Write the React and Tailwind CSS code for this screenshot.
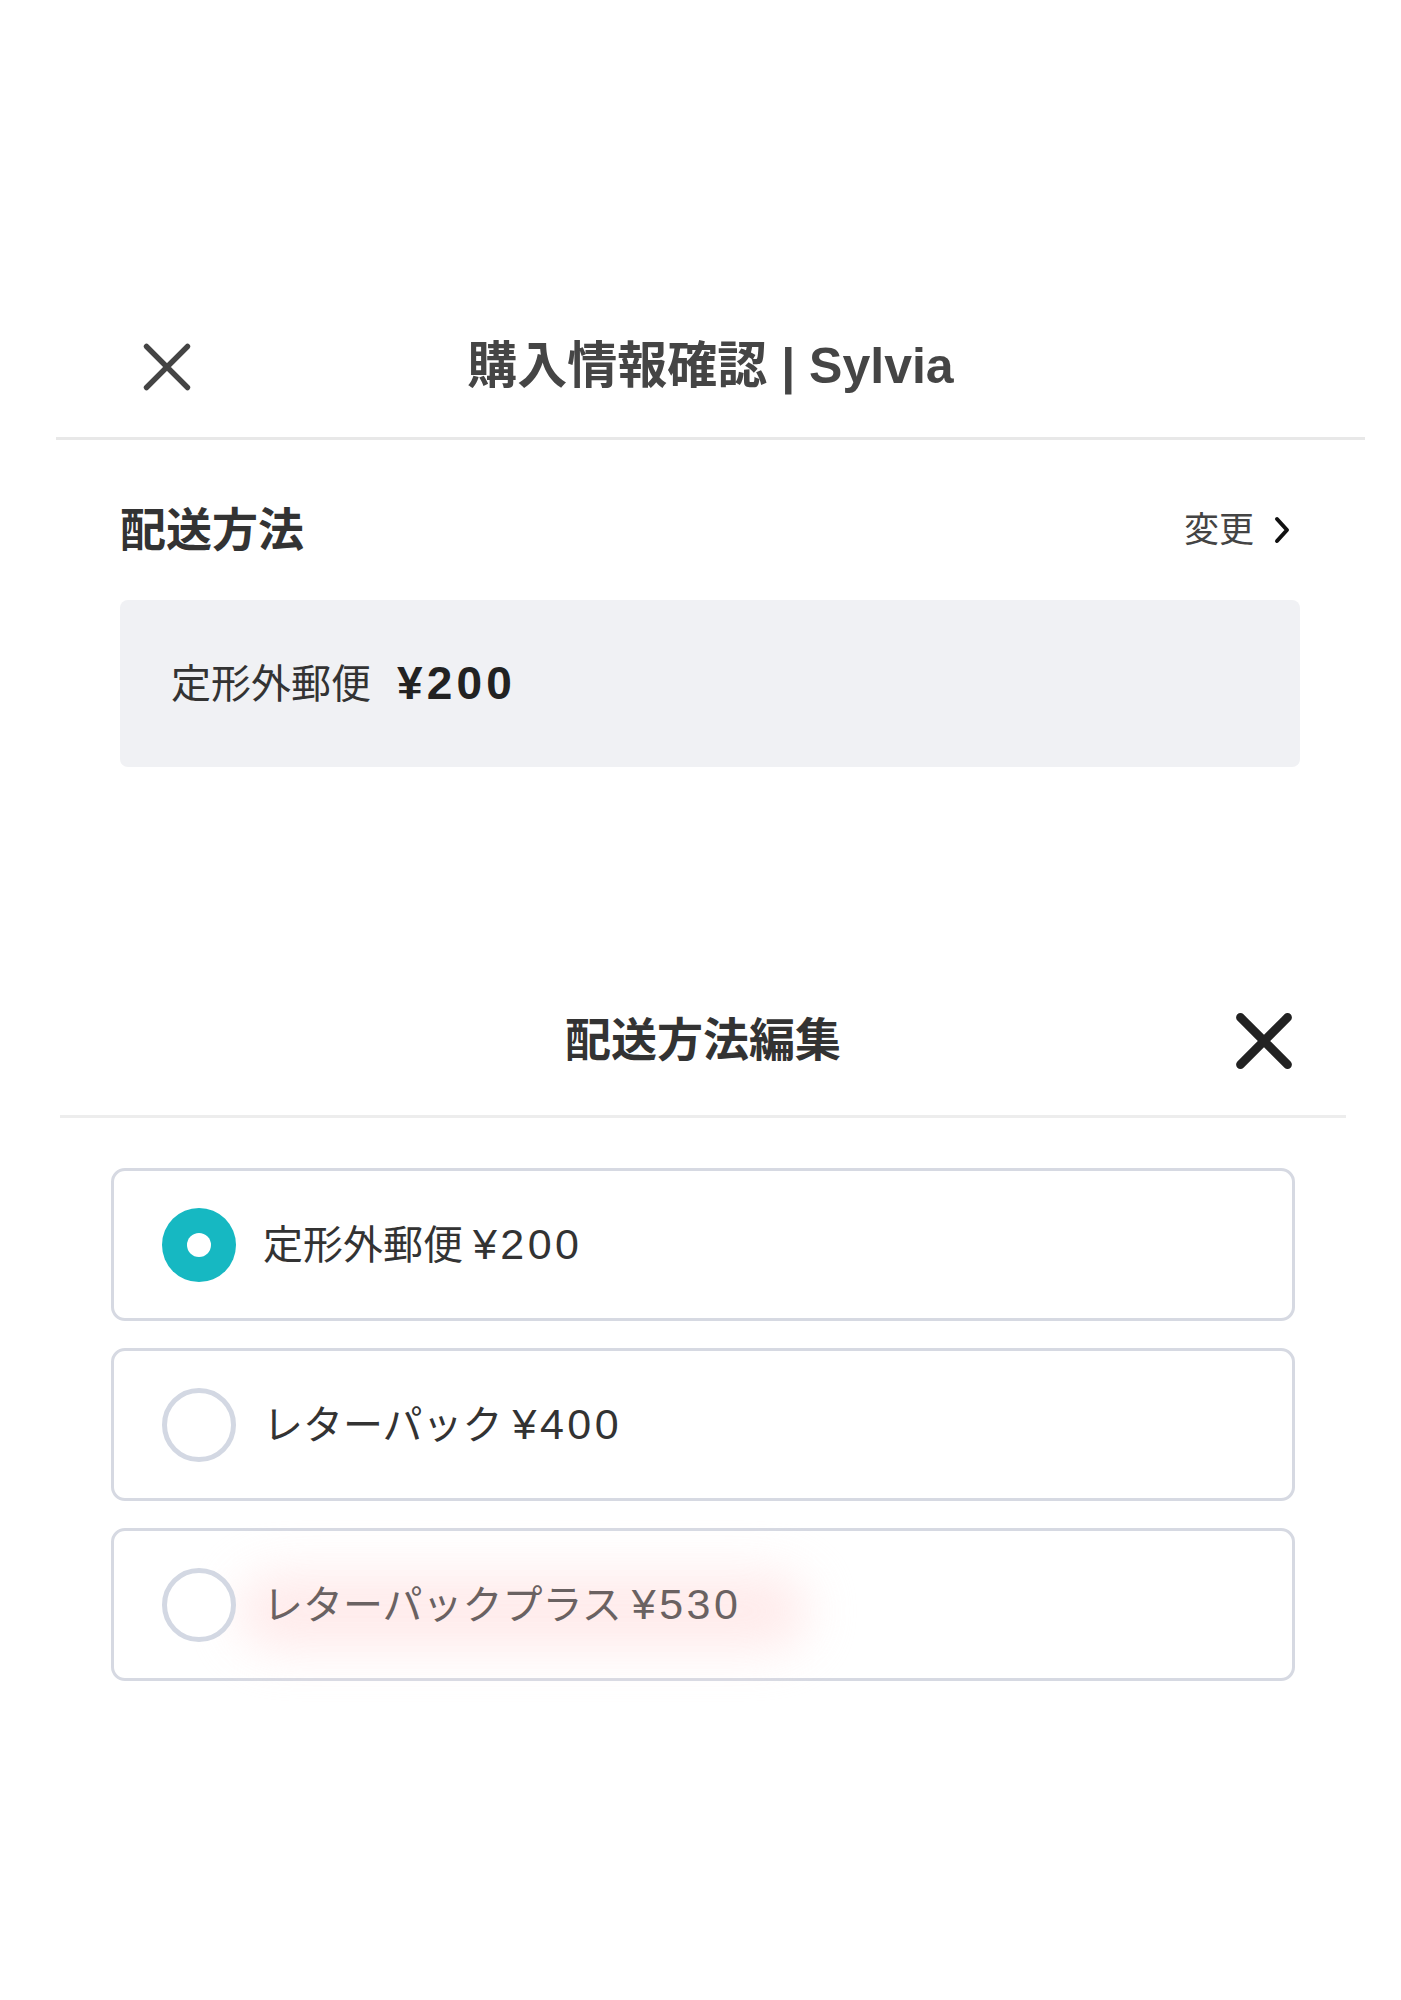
const options = [
  { name: '定形外郵便', price: '¥200', selected: true },
  { name: 'レターパック', price: '¥400', selected: false },
  { name: 'レターパックプラス', price: '¥530', selected: false, glow: true },
];

function CloseIcon({ size, stroke, color }) {
  return (
    <svg width={size} height={size} viewBox="0 0 50 50" fill="none">
      <path d="M6 6L44 44M44 6L6 44" stroke={color} strokeWidth={stroke} strokeLinecap="round" />
    </svg>
  );
}

export default function App() {
  return (
    <div className="min-h-[2000px] bg-white pt-[300px] font-['Liberation_Sans','Noto_Sans_CJK_JP',sans-serif]">
      {/* --- 購入情報確認 --- */}
      <div className="ml-[56px] mr-[36px]">
        <div className="grid h-[140px] grid-cols-[1fr_auto_1fr] items-center border-b-[3px] border-[#e8e8e8] px-[84px] pb-[4px]">
          <button className="justify-self-start">
            <CloseIcon size={54} stroke={5} color="#444" />
          </button>
          <h1 className="text-[50px] font-semibold text-[#454545]">購入情報確認 | Sylvia</h1>
          <div />
        </div>

        <div className="pl-[64px] pr-[65px]">
          <div className="mt-[60px] flex h-[60px] items-center justify-between">
            <h2 className="text-[46px] font-bold text-[#333]">配送方法</h2>
            <button className="flex items-center gap-[20px] pr-[10px] text-[35px] text-[#444]">
              変更
              <svg width="16" height="28" viewBox="0 0 16 28" fill="none">
                <path d="M3 3L13 14L3 25" stroke="#111" strokeWidth="4" strokeLinecap="round" strokeLinejoin="round" />
              </svg>
            </button>
          </div>

          <div className="mt-[40px] flex h-[167px] items-center rounded-[8px] bg-[#f0f1f4] pl-[51px]">
            <span className="text-[40px] text-[#333]">定形外郵便</span>
            <span className="ml-[26px] text-[46px] font-bold tracking-[0.09em] text-[#222]">¥200</span>
          </div>
        </div>
      </div>

      {/* --- 配送方法編集 --- */}
      <div className="ml-[60px] mr-[55px] mt-[199px]">
        <div className="grid h-[152px] grid-cols-[1fr_auto_1fr] items-center border-b-[3px] border-[#ededed] px-[51px]">
          <div />
          <h2 className="text-[46px] font-bold text-[#333]">配送方法編集</h2>
          <button className="justify-self-end">
            <CloseIcon size={62} stroke={7} color="#222" />
          </button>
        </div>

        <div className="flex flex-col gap-[27px] px-[51px] pt-[50px]">
          {options.map((opt) => (
            <div
              key={opt.name}
              className="relative flex h-[153px] items-center rounded-[14px] border-[3px] border-[#d6d9e2] pl-[48px]"
            >
              {opt.glow && (
                <div className="absolute left-[124px] top-[42px] h-[76px] w-[570px] rounded-full bg-[#ffe6e6] opacity-80 blur-xl" />
              )}
              {opt.selected ? (
                <div className="relative flex h-[74px] w-[74px] shrink-0 items-center justify-center rounded-full bg-[#16b8c2]">
                  <div className="h-[24px] w-[24px] rounded-full bg-white" />
                </div>
              ) : (
                <div className="relative h-[74px] w-[74px] shrink-0 rounded-full border-[5px] border-[#d3d8e3] bg-white" />
              )}
              <span
                className={
                  opt.glow
                    ? 'relative ml-[27px] text-[40px] text-[#6a6262]'
                    : 'relative ml-[27px] text-[40px] text-[#333]'
                }
              >
                {opt.name}
                <span className="ml-[10px] text-[43px] tracking-[0.08em]">{opt.price}</span>
              </span>
            </div>
          ))}
        </div>
      </div>
    </div>
  );
}
